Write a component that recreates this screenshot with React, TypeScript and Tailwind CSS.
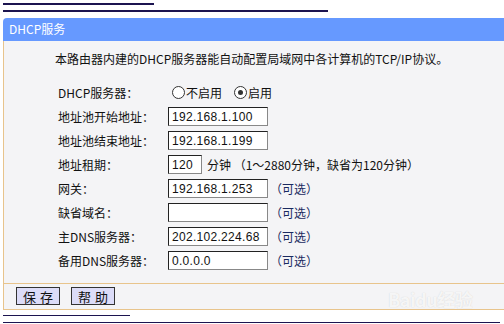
import React from "react";

const font = { fontFamily: '"Noto Sans CJK SC", "Liberation Sans", sans-serif' };

const rows: { label: string; value?: string; short?: boolean; note?: string; empty?: boolean }[] = [
  { label: "地址池开始地址：", value: "192.168.1.100" },
  { label: "地址池结束地址：", value: "192.168.1.199" },
  { label: "地址租期：", value: "120", short: true },
  { label: "网关：", value: "192.168.1.253", note: "（可选）" },
  { label: "缺省域名：", value: "", note: "（可选）" },
  { label: "主DNS服务器：", value: "202.102.224.68", note: "（可选）" },
  { label: "备用DNS服务器：", value: "0.0.0.0", note: "（可选）" },
];

function Field({ value, short }: { value: string; short?: boolean }) {
  return (
    <div
      className={`${short ? "w-[34px]" : "w-[100px]"} h-[19px] bg-white border border-[#222] border-r-[#888] border-b-[#888] flex items-center pl-[3px] text-[12px] text-[#111] leading-none`}
      style={{ fontFamily: '"Liberation Sans", sans-serif', letterSpacing: "0.3px" }}
    >
      {value}
    </div>
  );
}

function Radio({ checked }: { checked?: boolean }) {
  return (
    <span className="w-[13px] h-[13px] rounded-full border border-[#333] bg-white flex items-center justify-center mr-[1px]">
      {checked && <span className="w-[5px] h-[5px] rounded-full bg-[#333]" />}
    </span>
  );
}

export default function App() {
  return (
    <div className="w-[504px] h-[324px] bg-white overflow-hidden text-[12px] text-[#111]" style={font}>
      <div className="pt-[3px] pl-[3px]">
        <div className="h-[1.5px] w-[151px] bg-[#1c1450]" />
        <div className="h-[1.5px] w-[325px] bg-[#1c1450] mt-[5.5px]" />
      </div>
      <div className="mt-[6px] ml-[3px]">
        <div className="h-[23px] bg-[#6699ff] rounded-tl-[4px] flex items-center pl-[6px] text-white text-[12px]">
          DHCP服务
        </div>
        <div className="bg-[#f4f4f6] border-l border-[#e8c48c]">
          <div className="pt-[10px] pl-[51px] leading-[16px]">
            本路由器内建的DHCP服务器能自动配置局域网中各计算机的TCP/IP协议。
          </div>
          <div className="mt-[14px] pl-[54px] pb-[10px] border-b border-[#e8c48c]">
            <div className="h-6 flex items-center">
              <div className="w-[110px]">DHCP服务器：</div>
              <div className="flex items-center pl-[4px]">
                <Radio />
                <span>不启用</span>
                <span className="ml-[12px]" />
                <Radio checked />
                <span>启用</span>
              </div>
            </div>
            {rows.map((r) => (
              <div key={r.label} className="h-6 flex items-center">
                <div className="w-[110px]">{r.label}</div>
                <Field value={r.value ?? ""} short={r.short} />
                {r.short && (
                  <span className="ml-[5px] whitespace-nowrap">
                    分钟 （1～2880分钟，缺省为120分钟）
                  </span>
                )}
                {r.note && <span className="ml-[2px] text-[#1a2a60]">{r.note}</span>}
              </div>
            ))}
          </div>
          <div className="relative h-[26px] flex items-center gap-[11px] pl-[12px] border-b border-[#e8c48c]">
            <button className="h-[18px] w-[44px] bg-[#dcdcf8] border border-[#333] text-[13px] leading-none tracking-[4px] pl-[4px]">
              保存
            </button>
            <button className="h-[18px] w-[44px] bg-[#dcdcf8] border border-[#333] text-[13px] leading-none tracking-[4px] pl-[4px]">
              帮助
            </button>
            <span className="absolute left-[384px] top-[2px] text-[18px] font-bold text-white/80 tracking-tight" style={{ textShadow: "0 0 1px #ccc" }}>
              Baidu经验
            </span>
          </div>
        </div>
      </div>
      <div className="pl-[3px]">
        <div className="h-[1.5px] w-[127px] bg-[#1c1450] mt-[5px]" />
        <div className="h-[1.5px] w-[497px] bg-[#1c1450] mt-[5.5px]" />
      </div>
    </div>
  );
}
